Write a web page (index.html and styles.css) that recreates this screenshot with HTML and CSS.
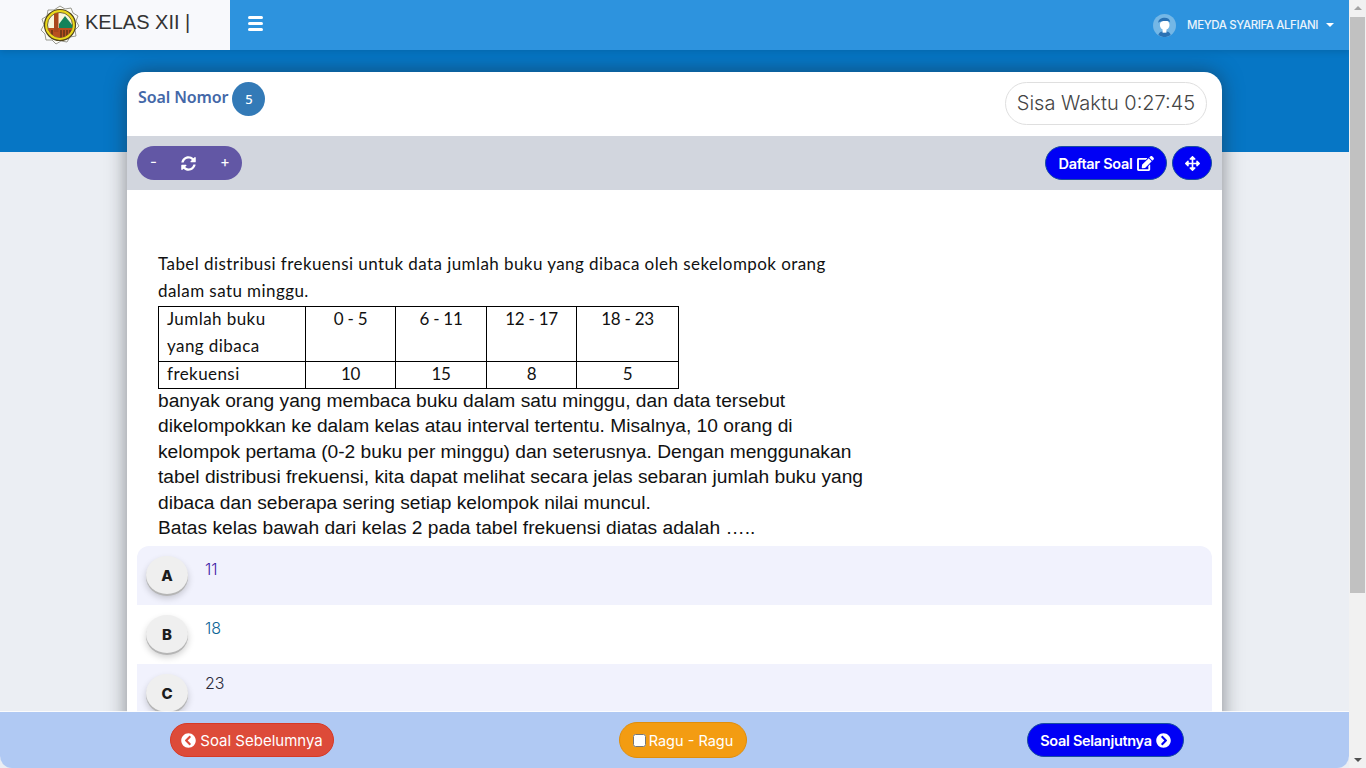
FILE: index.html
```html
<!DOCTYPE html>
<html lang="id">

<head>
  <meta charset="UTF-8">
  <meta name="viewport" content="width=device-width, initial-scale=1.0">
  <title>Kelas XII | Ujian</title>
  <link rel="stylesheet" href="styles.css">
</head>

<body>
  <div class="page">
    <div class="viewport">
      <header class="topbar">
        <div class="brand">
          <svg class="logo" viewBox="0 0 40 40" aria-hidden="true">
            <defs>
              <clipPath id="logo-inner"><circle cx="20" cy="20" r="12.500"/></clipPath>
            </defs>
            <path d="M20 1 L25 4 L31 3 L33 8 L38 11 L36 16 L39 21 L35 25 L36 31 L30 32 L27 37 L21 36 L16 39 L12 35 L6 35 L5 29 L1 25 L4 20 L2 14 L7 11 L8 5 L14 5 Z" fill="#fbfbf6" stroke="#8f8f86" stroke-width="0.900"/>
            <circle cx="20" cy="20" r="15.500" fill="#ecd91a" stroke="#50451c" stroke-width="1.200"/>
            <circle cx="20" cy="20" r="12.500" fill="#f8f6dc" stroke="#50451c" stroke-width="0.800"/>
            <g clip-path="url(#logo-inner)">
              <path d="M19 19 L25 11 L33 21 L33 24 L19 24 Z" fill="#15835a"/>
              <rect x="5" y="23" width="30" height="12" fill="#b8501f"/>
              <rect x="14" y="7" width="4.500" height="20" fill="#a9471c"/>
              <path d="M12 25v9M21 25v9M24 25v9M27 25v9M30 25v9" stroke="#3e2a12" stroke-width="1.100"/>
            </g>
          </svg>
          <span class="brand-name">KELAS XII |</span>
        </div>
        <div class="nav">
          <button class="burger" aria-label="Menu"><span></span><span></span><span></span></button>
          <div class="user">
            <svg class="avatar" viewBox="0 0 24 24" aria-hidden="true">
              <circle cx="12" cy="12" r="12" fill="#74b7e6"/>
              <path d="M5.500 22c.8-3 3-4 6.500-4s5.700 1 6.500 4a12 12 0 0 1-13 0z" fill="#2a72b5"/>
              <path d="M10 15h4v4.500h-4z" fill="#fff"/>
              <ellipse cx="12.200" cy="11.500" rx="5" ry="5.200" fill="#fff"/>
              <path d="M5.500 9c0-3 3-5 6.800-5 3.200 0 5.200 1.600 5.700 4.500-1-1-2.500-1.300-5-1.200-3 .1-5.500.4-7.500 1.700z" fill="#2a72b5"/>
            </svg>
            <span class="user-name">MEYDA SYARIFA ALFIANI</span>
            <span class="caret"></span>
          </div>
        </div>
      </header>

      <div class="hero"></div>

      <main class="card">
        <div class="card-head">
          <div class="soal-no">
            <span class="soal-label">Soal Nomor</span>
            <span class="soal-badge">5</span>
          </div>
          <div class="timer">Sisa Waktu 0:27:45</div>
        </div>

        <div class="toolbar">
          <div class="zoom-group">
            <span class="zoom-btn">-</span>
            <svg class="ico-sync" viewBox="0 0 512 512" aria-hidden="true"><path fill="#fff" d="M370.700 133.300C339.500 104 298.900 88 255.800 88c-77.500.1-144.300 53.200-162.800 126.900-1.300 5.400-6.100 9.200-11.700 9.200H24.100c-7.500 0-13.200-6.800-11.800-14.200C33.900 94.900 134.800 8 256 8c66.400 0 126.800 26.100 171.300 68.700L463 41c15.100-15.100 41-4.400 41 17v134c0 13.300-10.700 24-24 24H346c-21.400 0-32.100-25.900-17-41l41.700-41.700zM32 296h134c21.400 0 32.100 25.900 17 41l-41.700 41.700c31.200 29.300 71.800 45.300 114.900 45.300 77.400-.1 144.300-53.100 162.800-126.800 1.300-5.400 6.100-9.200 11.700-9.200h57.300c7.500 0 13.200 6.800 11.800 14.200C478.100 417.100 377.200 504 256 504c-66.400 0-126.800-26.100-171.300-68.700L49 471c-15.100 15.100-41 4.400-41-17V320c0-13.300 10.700-24 24-24z"/></svg>
            <span class="zoom-btn">+</span>
          </div>
          <div class="tool-right">
            <button class="pill pill-blue daftar">Daftar Soal
              <svg class="ico" viewBox="0 0 576 512" aria-hidden="true"><path fill="#fff" d="M402.600 83.200l90.200 90.200c3.800 3.800 3.800 10 0 13.800L274.400 405.600l-92.800 10.300c-12.400 1.400-22.900-9.100-21.500-21.500l10.300-92.800L388.800 83.200c3.800-3.800 10-3.800 13.800 0zm162-22.900l-48.800-48.800c-15.200-15.200-39.900-15.200-55.200 0l-35.400 35.400c-3.800 3.800-3.800 10 0 13.800l90.200 90.200c3.800 3.800 10 3.800 13.800 0l35.400-35.400c15.200-15.300 15.200-40 0-55.200zM384 346.200V448H64V128h229.800c3.200 0 6.200-1.300 8.500-3.500l40-40c7.600-7.600 2.200-20.500-8.500-20.500H48C21.500 64 0 85.500 0 112v352c0 26.500 21.500 48 48 48h352c26.500 0 48-21.500 48-48V306.200c0-10.700-12.900-16-20.500-8.500l-40 40c-2.200 2.300-3.500 5.300-3.500 8.500z"/></svg>
            </button>
            <button class="pill pill-blue move" aria-label="Geser">
              <svg class="ico" viewBox="0 0 512 512" aria-hidden="true"><path fill="#fff" d="M352.200 425.800l-79.200 79.200c-9.400 9.400-24.600 9.400-33.900 0l-79.200-79.200c-15.100-15.100-4.400-41 17-41h51.200V284H127.200v51.200c0 21.400-25.900 32.100-41 17L7 273c-9.400-9.400-9.400-24.600 0-33.900l79.200-79.200c15.100-15.100 41-4.400 41 17V228H228V127.200h-51.200c-21.400 0-32.100-25.900-17-41L239 7c9.400-9.400 24.600-9.400 33.900 0l79.200 79.200c15.100 15.100 4.400 41-17 41H284V228h100.800v-51.200c0-21.400 25.900-32.100 41-17l79.200 79.200c9.400 9.400 9.400 24.600 0 33.900l-79.200 79.200c-15.100 15.100-41 4.400-41-17V284H284v100.800h51.200c21.400 0 32.100 25.900 17 41z"/></svg>
            </button>
          </div>
        </div>

        <div class="content">
          <p class="calibri intro">Tabel distribusi frekuensi untuk data jumlah buku yang dibaca oleh sekelompok orang<br>dalam satu minggu.</p>
          <table class="freq calibri">
            <tr class="row-head">
              <td class="col-a"><div class="cell">Jumlah buku<br>yang dibaca</div></td>
              <td class="col-b"><div class="cell">0 - 5</div></td>
              <td class="col-c"><div class="cell">6 - 11</div></td>
              <td class="col-d"><div class="cell">12 - 17</div></td>
              <td class="col-e"><div class="cell">18 - 23</div></td>
            </tr>
            <tr class="row-data">
              <td class="col-a"><div class="cell">frekuensi</div></td>
              <td class="col-b"><div class="cell">10</div></td>
              <td class="col-c"><div class="cell">15</div></td>
              <td class="col-d"><div class="cell">8</div></td>
              <td class="col-e"><div class="cell">5</div></td>
            </tr>
          </table>
          <p class="arial">banyak orang yang membaca buku dalam satu minggu, dan data tersebut<br>dikelompokkan ke dalam kelas atau interval tertentu. Misalnya, 10 orang di<br>kelompok pertama (0-2 buku per minggu) dan seterusnya. Dengan menggunakan<br>tabel distribusi frekuensi, kita dapat melihat secara jelas sebaran jumlah buku yang<br>dibaca dan seberapa sering setiap kelompok nilai muncul.<br>Batas kelas bawah dari kelas 2 pada tabel frekuensi diatas adalah …..</p>
        </div>

        <div class="options">
          <div class="option tint first">
            <span class="opt-key">A</span>
            <span class="opt-text purple">11</span>
          </div>
          <div class="option">
            <span class="opt-key">B</span>
            <span class="opt-text teal">18</span>
          </div>
          <div class="option tint">
            <span class="opt-key">C</span>
            <span class="opt-text dark">23</span>
          </div>
        </div>
      </main>

      <footer class="bottombar">
        <button class="pill pill-red">
          <svg class="ico" viewBox="0 0 512 512" aria-hidden="true"><path fill="#fff" d="M256 504C119 504 8 393 8 256S119 8 256 8s248 111 248 248-111 248-248 248zM142.100 273l135.500 135.500c9.400 9.400 24.600 9.400 33.900 0l17-17c9.400-9.400 9.400-24.600 0-33.900L226.900 256l101.600-101.600c9.400-9.400 9.400-24.600 0-33.900l-17-17c-9.400-9.400-24.600-9.400-33.900 0L142.100 239c-9.400 9.400-9.400 24.600 0 34z"/></svg>
          Soal Sebelumnya
        </button>
        <label class="pill pill-orange"><input type="checkbox" class="ragu"> Ragu - Ragu</label>
        <button class="pill pill-blue next">Soal Selanjutnya
          <svg class="ico" viewBox="0 0 512 512" aria-hidden="true"><path fill="#fff" d="M256 8c137 0 248 111 248 248S393 504 256 504 8 393 8 256 119 8 256 8zm113.900 231L234.400 103.500c-9.400-9.400-24.600-9.400-33.900 0l-17 17c-9.400 9.400-9.400 24.600 0 33.900L285.100 256 183.500 357.600c-9.400 9.400-9.400 24.600 0 33.900l17 17c9.400 9.400 24.600 9.400 33.900 0L369.900 273c9.400-9.400 9.400-24.600 0-34z"/></svg>
        </button>
      </footer>
    </div>

    <div class="scrollbar" aria-hidden="true">
      <span class="arrow-up"></span>
      <span class="thumb"></span>
      <span class="arrow-down"></span>
    </div>
  </div>
</body>

</html>
```

FILE: styles.css
```css
* {
  box-sizing: border-box;
}

html,
body {
  margin: 0;
  height: 100%;
  overflow: hidden;
}

body {
  font-family: "Inter", "Liberation Sans", sans-serif;
  background-color: #ebeef3;
}

.page {
  display: flex;
  height: 768px;
}

.viewport {
  flex: 1;
  position: relative;
  overflow: hidden;
}

/* scrollbar */
.scrollbar {
  width: 17px;
  background-color: #f1f1f1;
  display: flex;
  flex-direction: column;
  align-items: center;
}

.arrow-up {
  margin-top: 6px;
  border-left: 4px solid transparent;
  border-right: 4px solid transparent;
  border-bottom: 4px solid #a3a3a3;
}

.thumb {
  width: 15px;
  height: 576px;
  margin-top: 7px;
  background-color: #c1c1c1;
}

.arrow-down {
  margin-top: auto;
  margin-bottom: 6px;
  border-left: 4px solid transparent;
  border-right: 4px solid transparent;
  border-top: 4px solid #505050;
}

/* top bar */
.topbar {
  display: flex;
  height: 50px;
  position: relative;
  z-index: 2;
  box-shadow: 0 2px 6px rgba(0, 0, 0, 0.12);
}

.brand {
  width: 230px;
  background-color: #f8f9fc;
  display: flex;
  align-items: center;
  padding-left: 40px;
  gap: 5px;
  height: 50px;
}

.logo {
  width: 40px;
  height: 40px;
}

.brand-name {
  font-family: "Liberation Sans", sans-serif;
  font-size: 20px;
  color: #333;
  padding-bottom: 5px;
}

.nav {
  flex: 1;
  background-color: #2d93de;
  display: flex;
  align-items: center;
  justify-content: space-between;
  padding: 0 15px 0 18px;
}

.burger {
  width: 15px;
  height: 15px;
  padding: 0;
  border: none;
  background: none;
  display: flex;
  flex-direction: column;
  justify-content: space-between;
  margin-bottom: 4px;
}

.burger span {
  display: block;
  height: 3px;
  border-radius: 2px;
  background-color: #fff;
}

.user {
  display: flex;
  align-items: center;
  color: #eaf4fc;
  font-size: 11.500px;
}

.avatar {
  width: 23px;
  height: 23px;
  margin-right: 11px;
}

.user-name {
  font-weight: 500;
  letter-spacing: -0.400px;
  margin-right: 8px;
}

.caret {
  width: 0;
  height: 0;
  border-left: 4.500px solid transparent;
  border-right: 4.500px solid transparent;
  border-top: 4px solid #fff;
}

.hero {
  height: 102px;
  background-color: #0676c5;
}

/* main card */
.card {
  position: relative;
  margin: -80px 0 0 127px;
  width: 1095px;
  height: 700px;
  background-color: #fff;
  border-radius: 18px 18px 0 0;
  box-shadow: 0 0 20px rgba(30, 35, 40, 0.5);
}

.card-head {
  height: 64px;
  display: flex;
  justify-content: space-between;
  padding: 10px 15px 0 11px;
}

.soal-no {
  display: flex;
  align-items: flex-start;
  gap: 4px;
}

.soal-label {
  font-family: "Noto Sans", sans-serif;
  font-weight: 600;
  font-size: 16px;
  letter-spacing: -0.100px;
  color: #4468a8;
  padding-top: 4px;
}

.soal-badge {
  width: 33px;
  height: 34px;
  border-radius: 50%;
  background-color: #337ab7;
  color: #fff;
  font-family: "Noto Sans", sans-serif;
  font-size: 13px;
  font-weight: 500;
  display: flex;
  align-items: center;
  justify-content: center;
}

.timer {
  height: 43px;
  width: 202px;
  border: 1px solid #dfdfdf;
  border-radius: 22px;
  font-size: 20px;
  font-weight: 300;
  color: #444;
  display: flex;
  align-items: center;
  justify-content: center;
  white-space: nowrap;
  padding-bottom: 1px;
}

.toolbar {
  height: 54px;
  background-color: #d2d6de;
  display: flex;
  align-items: center;
  justify-content: space-between;
  padding: 0 10px;
}

.zoom-group {
  width: 105px;
  height: 34px;
  border-radius: 17px;
  background-color: #6257a5;
  display: flex;
  align-items: center;
  justify-content: space-between;
  padding: 0 12px 0 13px;
  color: #fff;
}

.zoom-btn {
  font-size: 15px;
  padding-bottom: 3px;
}

.ico-sync {
  width: 15px;
  height: 15px;
}

.tool-right {
  display: flex;
  gap: 5px;
}

.pill {
  display: inline-flex;
  align-items: center;
  justify-content: center;
  gap: 4px;
  height: 34px;
  border-radius: 17px;
  border: 1px solid transparent;
  color: #fff;
  font-family: "Inter", "Liberation Sans", sans-serif;
  font-size: 14.500px;
  white-space: nowrap;
  padding: 0;
}

.ico {
  width: 15px;
  height: 15px;
}

.pill-blue {
  background-color: #0000f5;
  border-color: #1a4fa0;
  font-weight: 600;
  letter-spacing: -0.300px;
}

.daftar {
  width: 122px;
}

.daftar .ico {
  width: 17px;
}

.move {
  width: 40px;
}

/* soal */
.content {
  padding: 60px 20px 0 31px;
  height: 356px;
}

.calibri {
  font-family: "Lato", "Liberation Sans", sans-serif;
  font-size: 17px;
  letter-spacing: 0.430px;
  line-height: 27px;
  color: #111;
}

.intro {
  margin: 0;
}

.freq {
  border-collapse: collapse;
  width: 520px;
  table-layout: fixed;
  margin-top: 2px;
}

.freq td {
  border: 1px solid #000;
  padding: 0 8px;
  vertical-align: top;
  text-align: center;
  letter-spacing: -0.250px;
}

.cell {
  margin-top: -2px;
}

.row-head {
  height: 55px;
}

.row-data {
  height: 27px;
}

.row-data td {
  line-height: 28px;
}

.freq .col-a {
  width: 147px;
  text-align: left;
  letter-spacing: 0.430px;
}

.freq .col-b {
  width: 90px;
}

.freq .col-c {
  width: 91px;
}

.freq .col-d {
  width: 90px;
}

.freq .col-e {
  width: 102px;
}

.arial {
  margin: -1px 0 0;
  font-family: "Liberation Sans", sans-serif;
  font-size: 19.200px;
  line-height: 25.400px;
  color: #111;
}

/* pilihan */
.options {
  margin: 0 10px;
}

.option {
  height: 59px;
  display: flex;
  align-items: flex-start;
  padding: 10px 0 0 9px;
}

.tint {
  background-color: #f1f2fd;
}

.first {
  border-radius: 12px 12px 0 0;
}

.opt-key {
  width: 42px;
  height: 38px;
  border-radius: 50%;
  background-color: #efefef;
  box-shadow: 0 2px 0 #b5b5b5, 0 4px 7px rgba(0, 0, 0, 0.2);
  font-weight: 800;
  font-size: 15px;
  color: #1c1c1c;
  display: flex;
  align-items: center;
  justify-content: center;
}

.opt-text {
  margin-left: 17px;
  margin-top: 3px;
  font-size: 16px;
  font-weight: 300;
}

.purple {
  color: #3f1fa5;
}

.teal {
  color: #0e6596;
}

.dark {
  margin-top: -1px;
  color: #2a2a3a;
}

/* bar bawah */
.bottombar {
  position: absolute;
  left: 0;
  right: 0;
  bottom: 0;
  height: 56px;
  background-color: #b0c9f3;
  border-radius: 0 0 12px 12px;
  box-shadow: 0 -1px 0 rgba(255, 255, 255, 0.8);
  display: grid;
  grid-template-columns: 170px 164px 285px 128px 280px 157px;
  align-items: center;
  z-index: 3;
}

.pill-red {
  grid-column: 2;
  background-color: #dd4b39;
  border-color: #d73925;
  font-size: 15px;
}

.pill-orange {
  grid-column: 4;
  height: 36px;
  border-radius: 18px;
  background-color: #f39c12;
  border-color: #e08e0b;
  gap: 3px;
}

.next {
  grid-column: 6;
}

.ragu {
  width: 13px;
  height: 13px;
  margin: 0;
}
```
